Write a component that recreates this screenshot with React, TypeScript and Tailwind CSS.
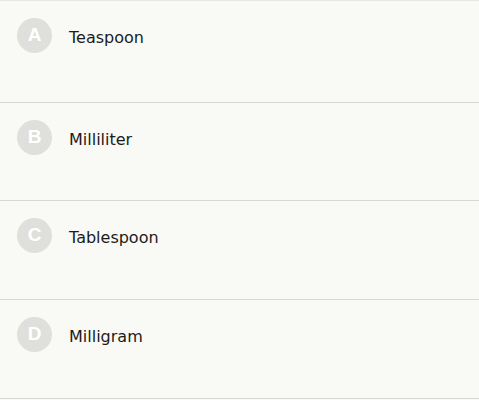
import React from 'react';

const options = [
  { letter: 'A', label: 'Teaspoon', h: 'h-[102px]' },
  { letter: 'B', label: 'Milliliter', h: 'h-[98px]' },
  { letter: 'C', label: 'Tablespoon', h: 'h-[99px]' },
  { letter: 'D', label: 'Milligram', h: 'h-[99px]' },
];

export default function App() {
  return (
    <div className="w-[479px] h-[400px] bg-[#f9f9f6] font-['DejaVu_Sans',sans-serif]">
      <div className="border-t border-[#e6e6e2]">
        {options.map((o) => (
          <div key={o.letter} className={`${o.h} border-b border-[#d8d8d2] flex items-start pt-[17px] pl-[17px]`}>
            <div className="w-[35px] h-[35px] rounded-full bg-[#dfdfdb] flex items-center justify-center text-white font-bold text-[19px] font-['Liberation_Sans',sans-serif]">
              {o.letter}
            </div>
            <span className="ml-[17px] mt-[10px] text-[16px] text-[#1c1c1c] leading-[20px]">{o.label}</span>
          </div>
        ))}
      </div>
    </div>
  );
}
